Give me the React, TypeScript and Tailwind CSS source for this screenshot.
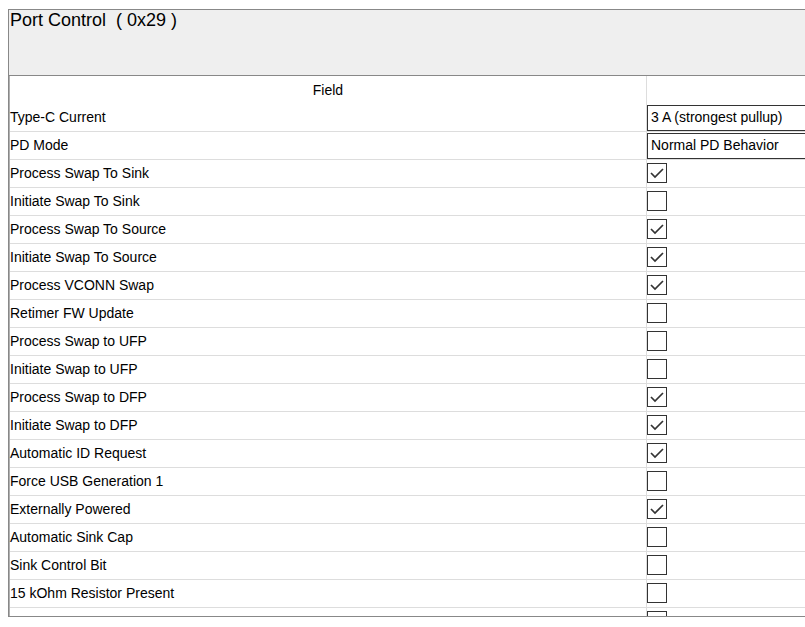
import React from "react";

type Row =
  | { label: string; kind: "select"; value: string }
  | { label: string; kind: "check"; checked: boolean };

const rows: Row[] = [
  { label: "Type-C Current", kind: "select", value: "3 A (strongest pullup)" },
  { label: "PD Mode", kind: "select", value: "Normal PD Behavior" },
  { label: "Process Swap To Sink", kind: "check", checked: true },
  { label: "Initiate Swap To Sink", kind: "check", checked: false },
  { label: "Process Swap To Source", kind: "check", checked: true },
  { label: "Initiate Swap To Source", kind: "check", checked: true },
  { label: "Process VCONN Swap", kind: "check", checked: true },
  { label: "Retimer FW Update", kind: "check", checked: false },
  { label: "Process Swap to UFP", kind: "check", checked: false },
  { label: "Initiate Swap to UFP", kind: "check", checked: false },
  { label: "Process Swap to DFP", kind: "check", checked: true },
  { label: "Initiate Swap to DFP", kind: "check", checked: true },
  { label: "Automatic ID Request", kind: "check", checked: true },
  { label: "Force USB Generation 1", kind: "check", checked: false },
  { label: "Externally Powered", kind: "check", checked: true },
  { label: "Automatic Sink Cap", kind: "check", checked: false },
  { label: "Sink Control Bit", kind: "check", checked: false },
  { label: "15 kOhm Resistor Present", kind: "check", checked: false },
  { label: "", kind: "check", checked: false },
];

const Checkbox: React.FC<{ checked: boolean }> = ({ checked }) => (
  <div className="w-[20px] h-[20px] border border-[#333] bg-white">
    {checked && (
      <svg width="18" height="18" viewBox="0 0 18 18" className="block">
        <path d="M3 9 L7 13 L15 5" fill="none" stroke="#333" strokeWidth="1.7" />
      </svg>
    )}
  </div>
);

export default function App() {
  return (
    <div className="w-[805px] h-[627px] overflow-hidden bg-white font-['Liberation_Sans',Arial,sans-serif] text-black">
      <div className="ml-2 mt-[9px] w-[900px] h-[608px] border-t border-l border-b border-[#888] overflow-hidden">
        {/* Title panel */}
        <div className="h-[66px] bg-[#efefef] border-b border-[#888] pl-px">
          <div className="text-[18px] leading-[20px] whitespace-pre">Port Control  ( 0x29 )</div>
        </div>

        {/* Field grid */}
        <div className="border-l border-[#b0b0b0] text-[14px] leading-[16px]">
          <div className="flex h-[28px]">
            <div className="w-[637px] border-r border-[#ddd] flex items-center justify-center">Field</div>
            <div className="flex-1" />
          </div>
          {rows.map((row, i) => (
            <div key={i} className="flex h-[28px] border-b border-[#ddd]">
              <div className="w-[637px] border-r border-[#ddd] flex items-center pb-[2px]">{row.label}</div>
              <div className="flex-1">
                {row.kind === "select" ? (
                  <div className="mt-px h-[26px] border border-[#333] flex items-center pb-[2px] pl-[3px]">{row.value}</div>
                ) : (
                  <div className="pt-[3px]">
                    <Checkbox checked={row.checked} />
                  </div>
                )}
              </div>
            </div>
          ))}
        </div>
      </div>
    </div>
  );
}
